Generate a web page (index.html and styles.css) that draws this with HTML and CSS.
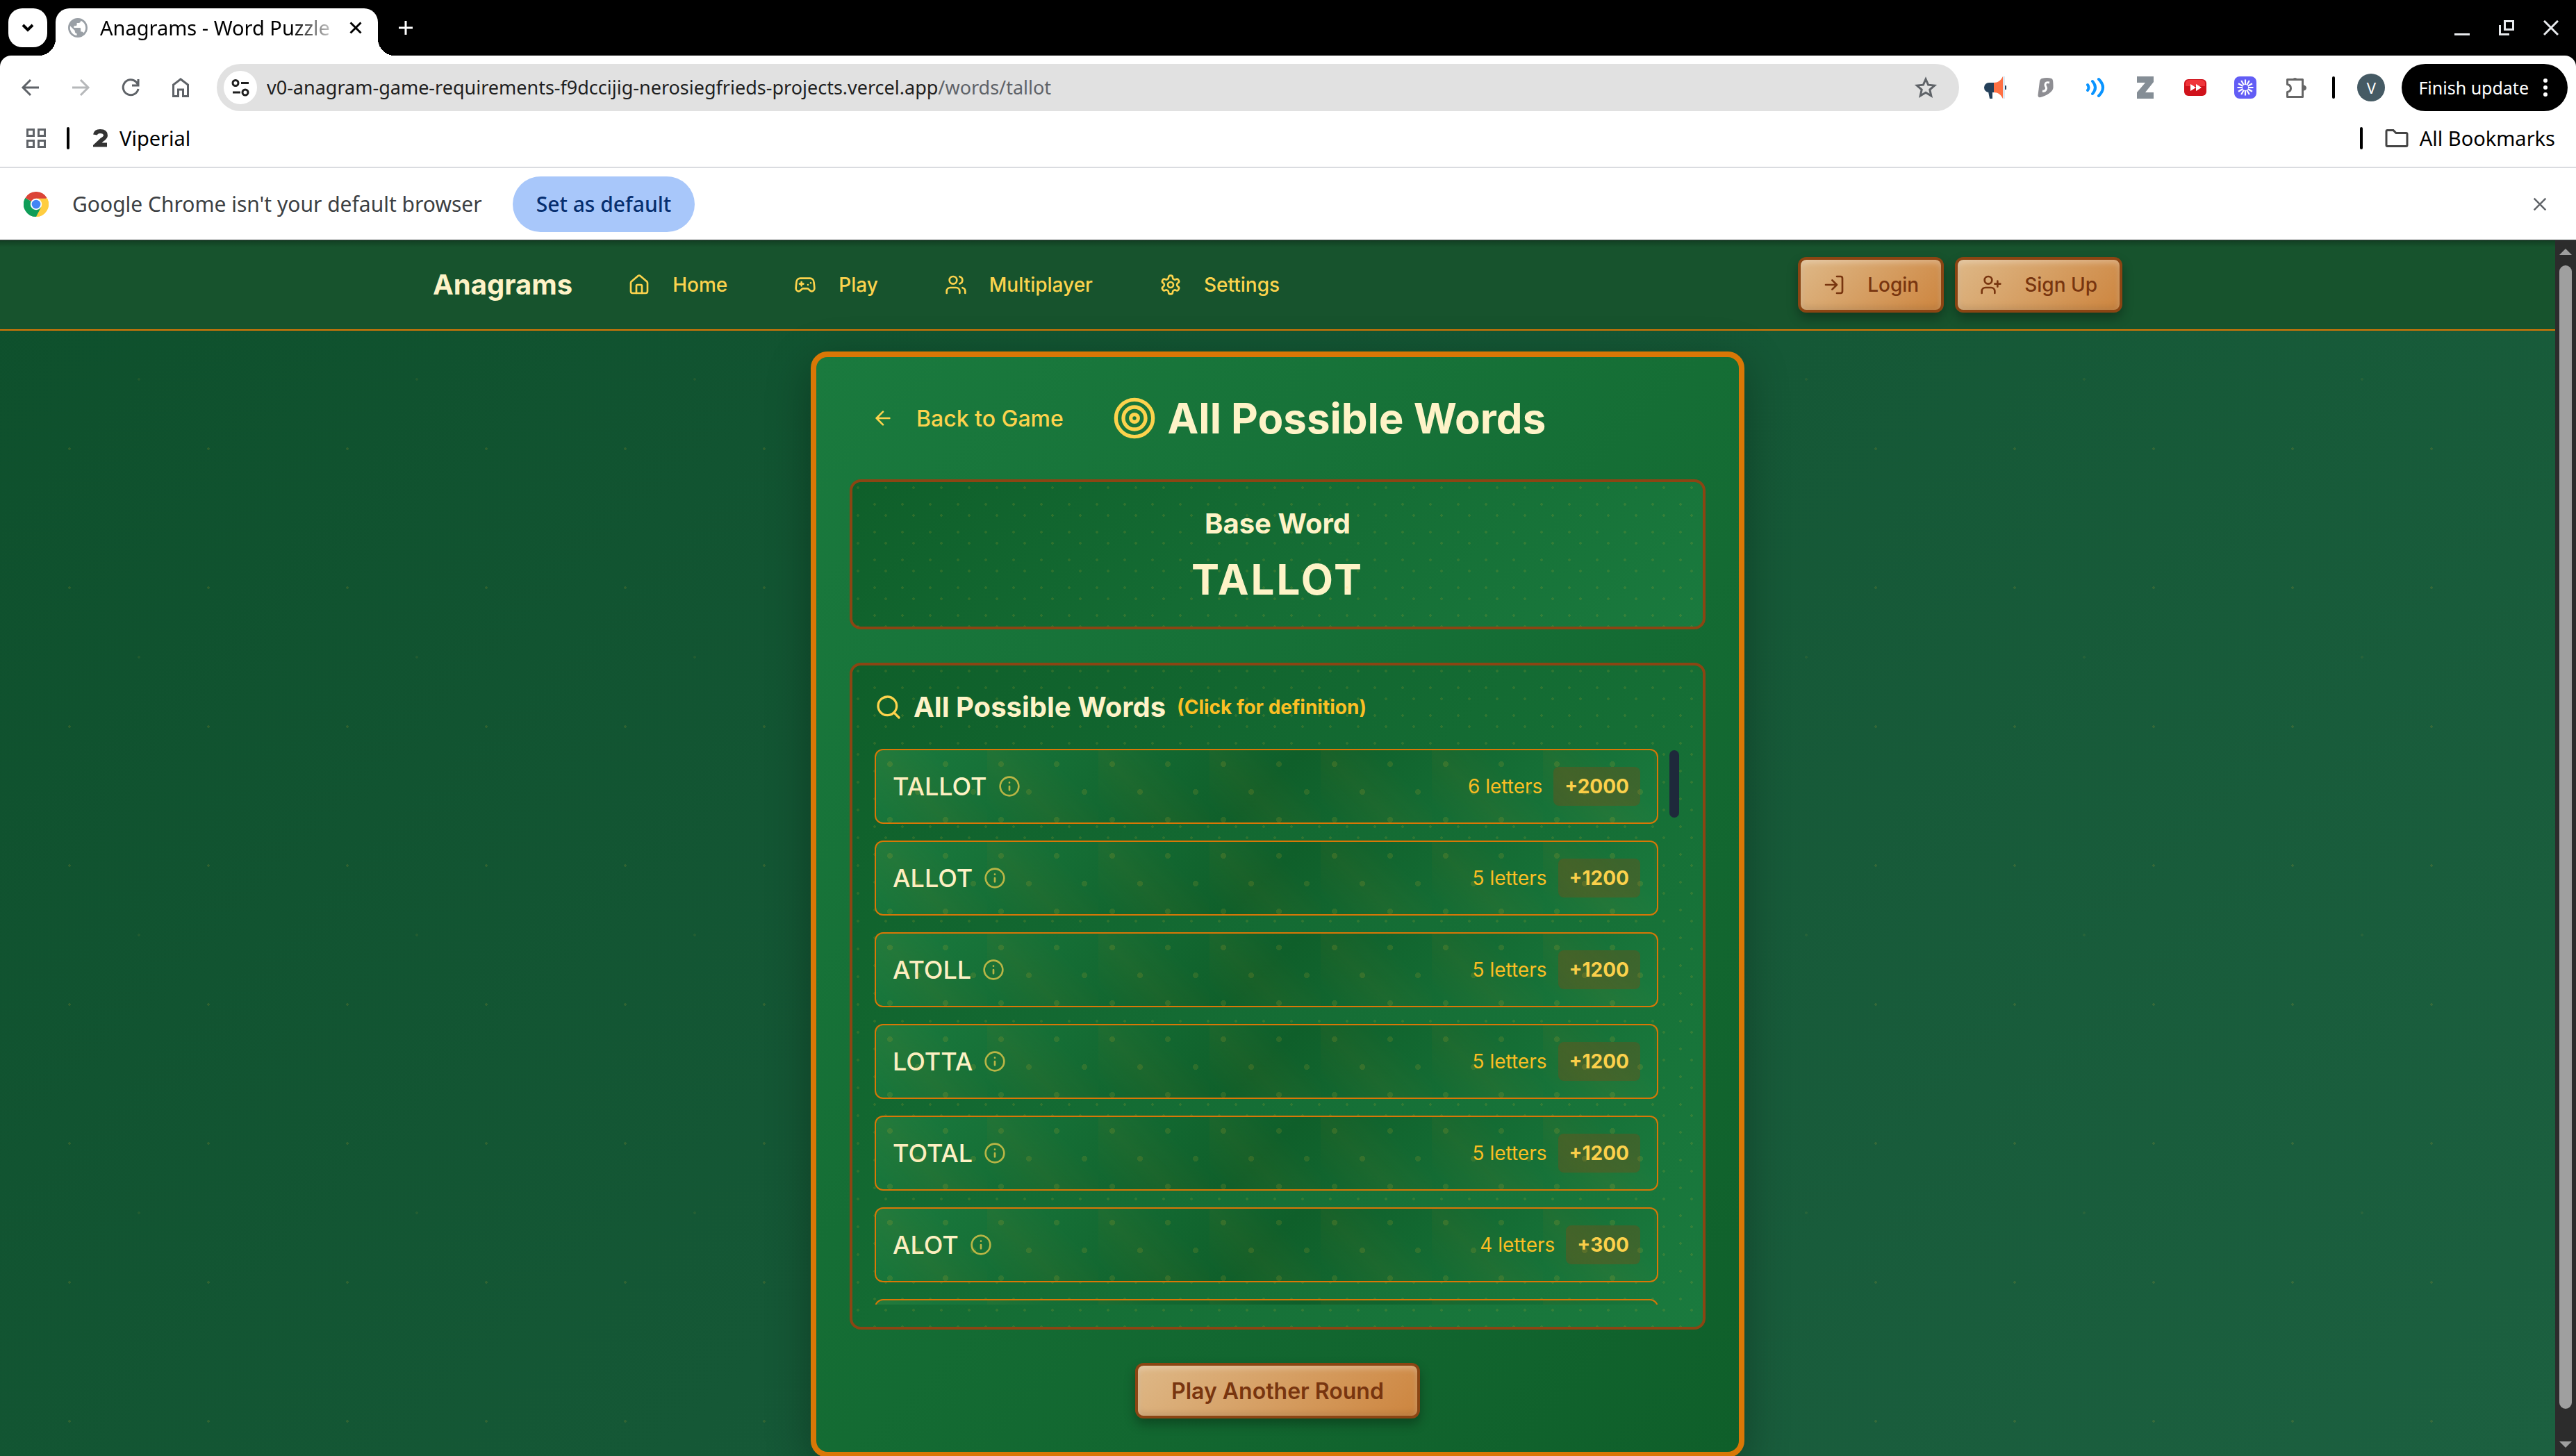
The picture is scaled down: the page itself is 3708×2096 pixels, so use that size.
FILE: index.html
```html
<!DOCTYPE html>
<html lang="en">
<head>
<meta charset="utf-8">
<title>Anagrams - Word Puzzle</title>
<link rel="stylesheet" href="styles.css">
</head>
<body>

<!-- Shared icons -->
<svg class="sprite" aria-hidden="true">
  <symbol id="close" viewBox="0 0 24 24"><path d="M2 2L22 22M22 2L2 22"/></symbol>
  <symbol id="info" viewBox="0 0 24 24"><circle cx="12" cy="12" r="10"/><path d="M12 16v-4M12 8h.01"/></symbol>
</svg>

<header class="browser">
  <div class="tabstrip">
    <button class="tab-search" aria-label="Search tabs"><svg viewBox="0 0 20 20"><path d="M3 6l7 7 7-7"/></svg></button>
    <div class="tab">
      <svg class="favicon" viewBox="2 2 20 20"><path fill="#9aa0a6" d="M12 2C6.480 2 2 6.480 2 12s4.480 10 10 10 10-4.480 10-10S17.520 2 12 2zm-1 17.930c-3.950-.490-7-3.850-7-7.930 0-.620.080-1.210.210-1.790L9 15v1c0 1.100.900 2 2 2v1.930zm6.900-2.540c-.260-.810-1-1.390-1.900-1.390h-1v-3c0-.550-.450-1-1-1H8v-2h2c.550 0 1-.450 1-1V7h2c1.100 0 2-.900 2-2v-.410c2.930 1.190 5 4.060 5 7.410 0 2.080-.800 3.970-2.100 5.390z"/></svg>
      <span class="tab-title">Anagrams - Word Puzzle</span>
      <button class="tab-close" aria-label="Close tab"><svg class="stroke-3" width="18" height="18"><use href="#close"/></svg></button>
    </div>
    <button class="tab-new" aria-label="New tab"><svg viewBox="0 0 20 20"><path d="M10 0v20M0 10h20"/></svg></button>
    <div class="window-controls">
      <button aria-label="Minimize"><svg viewBox="0 0 22 22"><path d="M0 20.500h22"/></svg></button>
      <button aria-label="Restore"><svg viewBox="0 0 22 22"><path d="M8.500 1.500h12v12h-12zM1.500 7v13.500H15"/></svg></button>
      <button aria-label="Close window"><svg viewBox="0 0 22 22"><path d="M1 1l20 20M21 1L1 21"/></svg></button>
    </div>
  </div>

  <div class="toolbar">
    <button aria-label="Back"><svg viewBox="0 0 40 40"><path d="M32 20H9M20 9L9 20l11 11"/></svg></button>
    <button class="dim" aria-label="Forward"><svg viewBox="0 0 40 40"><path d="M8 20h23M20 9l11 11-11 11"/></svg></button>
    <button aria-label="Reload"><svg viewBox="0 0 40 40"><path d="M31 22a11 11 0 1 1-3-10l3 4M31 8v9h-9"/></svg></button>
    <button aria-label="Home"><svg viewBox="0 0 40 40"><path d="M9.500 32.500V16L20 8l10.500 8v16.500h-7V23h-7v9.500z"/></svg></button>
    <div class="omnibox">
      <button class="site-info" aria-label="Site information"><svg viewBox="0 0 48 48"><circle cx="17" cy="17.500" r="4"/><circle cx="31" cy="31" r="4"/><path d="M25 17.500h11M13 31h11"/></svg></button>
      <span class="url">v0-anagram-game-requirements-f9dccijig-nerosiegfrieds-projects.vercel.app<span class="url-path">/words/tallot</span></span>
      <button aria-label="Bookmark this tab"><svg viewBox="0 0 40 40"><path d="M20 8l3.600 8.200 9 .9-6.800 6 2 8.900L20 27.300 12.200 32l2-8.900-6.800-6 9-.9z"/></svg></button>
    </div>
    <div class="extensions">
      <svg viewBox="0 0 32 32"><path d="M7 9h8v14H7a7 7 0 0 1 0-14zM6 22h6v10H8z" fill="#24405a"/><path d="M14 9c6 0 10-3 13-9v32c-3-6-7-9-13-9z" fill="#ff7043"/><path d="M27 0h3v32h-3z" fill="#dfe9f3"/><path d="M30 13a3 3 0 0 1 0 6z" fill="#24405a"/></svg>
      <svg viewBox="0 0 32 32"><path d="M11 3c5-1.500 10-1.500 14 0 2 1 2.500 3 2.500 13 0 6-10 12-18 14-3 .5-4-.5-4-3L8 7c.5-2 1.500-3.500 3-4z" fill="#8e8e93"/><path d="M22 9c-4-1-6 0-6 3 0 4 3 3 1 7-1 2-3 2.500-5 2" stroke="#fff" stroke-width="3" fill="none"/></svg>
      <svg viewBox="0 0 32 32" fill="none" stroke="#0a94ff" stroke-width="4" stroke-linecap="round"><path d="M5 12q3 4 0 8M12 7q8 9 0 18M21 4q12 12 0 24"/></svg>
      <svg viewBox="0 0 32 32"><path d="M4 0h24v8L16 23h12v9H4v-9L16 9H4z" fill="#858e96"/></svg>
      <svg viewBox="0 0 32 32"><rect y="4" width="32" height="24" rx="6" fill="#d0121b"/><path d="M2 9q1-4 6-4h16q5 0 6 4v5H2z" fill="#f0343a"/><path d="M9 11l8 5-8 5zM17 11l8 5-8 5z" fill="#fff"/></svg>
      <svg viewBox="0 0 32 32"><rect width="32" height="32" rx="8" fill="#625df5"/><path d="M16 4.500v23M4.500 16h23M10.200 6l11.600 20M21.800 6L10.200 26M6 10.200l20 11.600M26 10.200L6 21.800" stroke="#fff" stroke-width="2.200"/><circle cx="16" cy="16" r="4" fill="#625df5"/></svg>
      <svg viewBox="0 0 32 32"><path d="M4.500 29.500h22V4.500h-22v7q5 1 5 5.500t-5 5.500z" fill="none" stroke="#666" stroke-width="3" stroke-linejoin="round"/><path d="M12 4a4 4 0 0 1 7 0zM27 12q5 1 5 4.500T27 21z" fill="#666"/></svg>
    </div>
    <span class="divider"></span>
    <button class="avatar" aria-label="Profile">V</button>
    <button class="update"><span>Finish update</span><svg viewBox="0 0 8 28"><circle cx="4" cy="4" r="3"/><circle cx="4" cy="14" r="3"/><circle cx="4" cy="24" r="3"/></svg></button>
  </div>

  <div class="bookmarks">
    <svg class="apps" viewBox="0 0 28 28"><path d="M1.500 1.500h9v9h-9zM17.500 1.500h9v9h-9zM1.500 17.500h9v9h-9zM17.500 17.500h9v9h-9z"/></svg>
    <span class="divider"></span>
    <a class="bookmark" href="#"><svg class="two" viewBox="0 0 22 26"><path d="M3 8Q4 3 10 3Q18 3 18 9Q18 12 13 15L5 22.500H20"/></svg>Viperial</a>
    <a class="bookmark all" href="#"><span class="divider"></span><svg class="folder" viewBox="0 0 34 26"><path d="M2 3q0-1.500 1.500-1.500H12l4 4h14.500q1.500 0 1.500 1.500v16q0 1.500-1.500 1.500h-27Q2 24.500 2 23z"/></svg>All Bookmarks</a>
  </div>

  <div class="infobar">
    <svg class="chrome" viewBox="0 0 48 48"><circle cx="24" cy="24" r="24" fill="#fff"/><path d="M24 24L3.200 12A24 24 0 0 1 44.800 12z" fill="#db4437"/><path d="M24 24L44.800 12A24 24 0 0 1 24 48z" fill="#ffcd40"/><path d="M24 24L24 48A24 24 0 0 1 3.200 12z" fill="#0f9d58"/><path d="M24 13h21.300A24 24 0 0 1 24 48l9.500-18.500z" fill="#ffcd40"/><path d="M14.500 29.500L3.200 12A24 24 0 0 0 24 48l9.500-18.500z" fill="#0f9d58"/><circle cx="24" cy="24" r="11" fill="#fff"/><circle cx="24" cy="24" r="8.500" fill="#4285f4"/></svg>
    <span>Google Chrome isn't your default browser</span>
    <button class="set-default">Set as default</button>
    <button class="infobar-close" aria-label="Dismiss"><svg class="stroke-3" width="20" height="20"><use href="#close"/></svg></button>
  </div>
</header>

<div class="viewport">
  <div class="page">
    <nav class="site-nav">
      <div class="site-nav-inner">
        <a class="brand" href="#">Anagrams</a>
        <div class="nav-links">
          <a href="#"><svg viewBox="0 0 24 24"><path d="M15 21v-8a1 1 0 0 0-1-1h-4a1 1 0 0 0-1 1v8"/><path d="M3 10a2 2 0 0 1 .709-1.528l7-5.999a2 2 0 0 1 2.582 0l7 5.999A2 2 0 0 1 21 10v9a2 2 0 0 1-2 2H5a2 2 0 0 1-2-2z"/></svg>Home</a>
          <a href="#"><svg viewBox="0 0 24 24"><path d="M6 11h4M8 9v4M15 12h.01M18 10h.01"/><path d="M17.320 5H6.680a4 4 0 0 0-3.978 3.590C2.604 9.416 2 14.456 2 16a3 3 0 0 0 3 3c1 0 1.500-.5 2-1l1.414-1.414A2 2 0 0 1 9.828 16h4.344a2 2 0 0 1 1.414.586L17 18c.5.500 1 1 2 1a3 3 0 0 0 3-3c0-1.545-.604-6.584-.685-7.258A4 4 0 0 0 17.320 5z"/></svg>Play</a>
          <a href="#"><svg viewBox="0 0 24 24"><path d="M16 21v-2a4 4 0 0 0-4-4H6a4 4 0 0 0-4 4v2"/><circle cx="9" cy="7" r="4"/><path d="M22 21v-2a4 4 0 0 0-3-3.870M16 3.130a4 4 0 0 1 0 7.750"/></svg>Multiplayer</a>
          <a href="#"><svg viewBox="0 0 24 24"><path d="M12.220 2h-.44a2 2 0 0 0-2 2v.18a2 2 0 0 1-1 1.730l-.43.250a2 2 0 0 1-2 0l-.15-.08a2 2 0 0 0-2.730.73l-.22.380a2 2 0 0 0 .73 2.730l.15.100a2 2 0 0 1 1 1.720v.510a2 2 0 0 1-1 1.740l-.15.090a2 2 0 0 0-.73 2.730l.22.380a2 2 0 0 0 2.730.73l.15-.08a2 2 0 0 1 2 0l.43.250a2 2 0 0 1 1 1.730V20a2 2 0 0 0 2 2h.44a2 2 0 0 0 2-2v-.18a2 2 0 0 1 1-1.730l.43-.25a2 2 0 0 1 2 0l.15.080a2 2 0 0 0 2.730-.73l.22-.39a2 2 0 0 0-.73-2.730l-.15-.08a2 2 0 0 1-1-1.740v-.5a2 2 0 0 1 1-1.740l.15-.09a2 2 0 0 0 .73-2.730l-.22-.38a2 2 0 0 0-2.730-.73l-.15.080a2 2 0 0 1-2 0l-.43-.25a2 2 0 0 1-1-1.730V4a2 2 0 0 0-2-2z"/><circle cx="12" cy="12" r="3"/></svg>Settings</a>
        </div>
        <div class="nav-actions">
          <button class="wood"><svg viewBox="0 0 24 24"><path d="M15 3h4a2 2 0 0 1 2 2v14a2 2 0 0 1-2 2h-4M10 17l5-5-5-5M15 12H3"/></svg>Login</button>
          <button class="wood"><svg viewBox="0 0 24 24"><path d="M16 21v-2a4 4 0 0 0-4-4H6a4 4 0 0 0-4 4v2"/><circle cx="9" cy="7" r="4"/><path d="M19 8v6M22 11h-6"/></svg>Sign Up</button>
        </div>
      </div>
    </nav>

    <main class="card">
      <div class="card-head">
        <a class="back" href="#"><svg viewBox="0 0 24 24"><path d="M12 19l-7-7 7-7M19 12H5"/></svg>Back to Game</a>
        <h1><svg viewBox="0 0 24 24"><circle cx="12" cy="12" r="10"/><circle cx="12" cy="12" r="6"/><circle cx="12" cy="12" r="2"/></svg>All Possible Words</h1>
        <span class="head-spacer"></span>
      </div>

      <section class="panel base">
        <h2>Base Word</h2>
        <p class="base-word">TALLOT</p>
      </section>

      <section class="panel">
        <h2 class="list-title"><svg viewBox="0 0 24 24"><circle cx="11" cy="11" r="8"/><path d="M21 21l-4.300-4.300"/></svg>All Possible Words <small>(Click for definition)</small></h2>
        <div class="list-frame">
          <ul class="words">
            <li><button class="word"><span class="name">TALLOT</span><svg><use href="#info"/></svg><span class="count">6 letters</span><span class="score">+2000</span></button></li>
            <li><button class="word"><span class="name">ALLOT</span><svg><use href="#info"/></svg><span class="count">5 letters</span><span class="score">+1200</span></button></li>
            <li><button class="word"><span class="name">ATOLL</span><svg><use href="#info"/></svg><span class="count">5 letters</span><span class="score">+1200</span></button></li>
            <li><button class="word"><span class="name">LOTTA</span><svg><use href="#info"/></svg><span class="count">5 letters</span><span class="score">+1200</span></button></li>
            <li><button class="word"><span class="name">TOTAL</span><svg><use href="#info"/></svg><span class="count">5 letters</span><span class="score">+1200</span></button></li>
            <li><button class="word"><span class="name">ALOT</span><svg><use href="#info"/></svg><span class="count">4 letters</span><span class="score">+300</span></button></li>
            <li><div class="word"></div></li>
          </ul>
          <span class="list-thumb"></span>
        </div>
      </section>

      <div class="card-foot"><button class="wood large">Play Another Round</button></div>
    </main>
  </div>

  <div class="scrollbar">
    <svg viewBox="0 0 18 9"><path d="M9 0l9 9H0z"/></svg>
    <span class="scroll-thumb"></span>
    <svg viewBox="0 0 18 9"><path d="M0 0h18L9 9z"/></svg>
  </div>
</div>

</body>
</html>
```
FILE: styles.css
```css
* { box-sizing: border-box; }

:root {
  --ui: "Noto Sans", sans-serif;
  --app: Inter, sans-serif;
  --cream: #fef3c7;
  --gold: #fcd34d;
  --amber: #fbbf24;
  --orange: #d97706;
  --brown: #8b4513;
  --felt-light: #1a7a3e;
  --felt-dark: #0f5f2a;
}

body {
  margin: 0;
  height: 100vh;
  display: flex;
  flex-direction: column;
  overflow: hidden;
  background: #000;
  font-family: var(--app);
}

button {
  margin: 0;
  padding: 0;
  border: 0;
  background: none;
  color: inherit;
  font: inherit;
}

a { color: inherit; text-decoration: none; }
svg { display: block; flex: none; }
.sprite { position: absolute; width: 0; height: 0; }

/* Browser frame */
.browser {
  flex: none;
  font-family: var(--ui);
  font-size: 29px;
  line-height: 40px;
  color: #000;
}

.tabstrip {
  display: flex;
  align-items: flex-start;
  height: 80px;
  padding: 12px 14px 0 12px;
}

.tab-search {
  display: grid;
  place-items: center;
  width: 56px;
  height: 56px;
  margin-right: 12px;
  border-radius: 20px;
  background: #fff;
}
.tab-search svg { width: 20px; fill: none; stroke: #000; stroke-width: 4; }

.tab {
  position: relative;
  display: flex;
  align-items: center;
  width: 464px;
  height: 68px;
  padding: 0 18px 12px;
  border-radius: 20px 20px 0 0;
  background: #fff;
}
.tab::before,
.tab::after {
  content: "";
  position: absolute;
  bottom: 0;
  width: 24px;
  height: 24px;
}
.tab::before { right: 100%; background: radial-gradient(circle at 0 0, transparent 24px, #fff 24px); }
.tab::after { left: 100%; background: radial-gradient(circle at 100% 0, transparent 24px, #fff 24px); }
.favicon { width: 28px; margin-right: 18px; }
.tab-title {
  flex: 1;
  white-space: nowrap;
  mask-image: linear-gradient(to right, #000 276px, transparent 348px);
}
.tab-close { display: grid; place-items: center; width: 28px; }
.stroke-3 { stroke: #000; stroke-width: 4; }
.tab-new { display: grid; place-items: center; width: 56px; height: 56px; margin-left: 12px; }
.tab-new svg { width: 20px; stroke: #fff; stroke-width: 3; }

.window-controls { display: flex; gap: 20px; margin-left: auto; }
.window-controls button { display: grid; place-items: center; width: 44px; height: 56px; }
.window-controls svg { width: 22px; fill: none; stroke: #e8eaed; stroke-width: 3; }

.toolbar {
  display: flex;
  align-items: center;
  height: 92px;
  padding: 0 12px 0 24px;
  border-radius: 16px 16px 0 0;
  background: #fff;
}
.toolbar > button:not(.avatar, .update) { margin-right: 32px; }
.toolbar button > svg[viewBox="0 0 40 40"] {
  width: 40px;
  fill: none;
  stroke: #5f6368;
  stroke-width: 3;
}
.toolbar .dim { opacity: .45; }

.omnibox {
  flex: 1;
  display: flex;
  align-items: center;
  height: 68px;
  padding: 0 28px 0 10px;
  border-radius: 34px;
  background: #e1e1e1;
  color: #1f1f1f;
  font-size: 27px;
}
.site-info { margin-right: 14px; border-radius: 24px; background: #fff; }
.site-info svg { width: 48px; fill: none; stroke: #1f1f1f; stroke-width: 3; }
.url { flex: 1; white-space: nowrap; overflow: hidden; }
.url-path { color: #5f6368; }

.extensions { display: flex; gap: 40px; margin: 0 37px 0 36px; }
.extensions svg { width: 32px; height: 32px; }
.divider { width: 4px; height: 32px; border-radius: 2px; background: #000; }
.avatar {
  width: 40px;
  height: 40px;
  margin: 0 24px 0 32px;
  border-radius: 20px;
  background: #455a64;
  color: #fff;
  font-size: 22px;
  line-height: 40px;
}
.update {
  display: flex;
  align-items: center;
  gap: 20px;
  height: 68px;
  padding: 0 28px 0 24px;
  border-radius: 34px;
  background: #000;
  color: #fff;
  font-size: 25px;
}
.update svg { width: 8px; fill: #fff; }

.bookmarks {
  display: flex;
  align-items: center;
  height: 70px;
  padding: 0 30px 14px 38px;
  background: #fff;
  border-bottom: 2px solid #dadce0;
}
.apps { width: 28px; margin-right: 30px; fill: none; stroke: #5f6368; stroke-width: 3; }
.bookmark { display: flex; align-items: center; gap: 16px; }
.two { width: 22px; margin-left: 34px; fill: none; stroke: #333; stroke-width: 6; }
.all { margin-left: auto; }
.folder { width: 34px; height: 26px; margin-left: 16px; fill: none; stroke: #444; stroke-width: 3; }

.infobar {
  display: flex;
  align-items: center;
  height: 104px;
  padding: 0 42px 0 34px;
  background: #fff;
  border-bottom: 1px solid #3c4043;
  color: #3c4043;
  font-size: 30px;
}
.chrome { width: 36px; margin-right: 34px; }
.set-default {
  height: 80px;
  margin-left: 44px;
  padding: 0 34px;
  border-radius: 40px;
  background: #a8c7fa;
  color: #062e6f;
  font-weight: 500;
}
.infobar-close { margin-left: auto; }
.infobar-close svg { stroke: #5f6368; stroke-width: 3; }

/* Web page */
.viewport { flex: 1; display: flex; min-height: 0; }

.page {
  flex: 1;
  overflow: hidden;
  background:
    radial-gradient(circle, rgba(251, 191, 36, .12) 2px, transparent 2px) 0 0 / 200px 200px,
    radial-gradient(circle, rgba(251, 191, 36, .07) 2px, transparent 2px) 0 0 / 400px 400px,
    linear-gradient(135deg, #0e502c, #1c6040);
}

.site-nav {
  background: linear-gradient(rgba(0, 0, 0, .25), transparent 10px), #17532d;
  border-bottom: 2px solid var(--orange);
}
.site-nav-inner {
  display: flex;
  align-items: center;
  max-width: 2560px;
  height: 128px;
  margin: 0 auto;
  padding: 0 64px;
  font-size: 28px;
  line-height: 40px;
  font-weight: 500;
}
.brand { font-size: 40px; font-weight: 700; color: var(--cream); }
.nav-links { display: flex; gap: 32px; margin-left: 48px; color: var(--gold); }
.nav-links a { display: flex; align-items: center; gap: 32px; padding: 0 32px; }
.site-nav svg,
.back svg {
  width: 32px;
  fill: none;
  stroke: currentColor;
  stroke-width: 2;
  stroke-linecap: round;
  stroke-linejoin: round;
}
.nav-actions { display: flex; gap: 16px; margin-left: auto; }

.wood {
  display: flex;
  align-items: center;
  gap: 32px;
  height: 80px;
  padding: 0 32px;
  border: 4px solid var(--brown);
  border-radius: 12px;
  background: linear-gradient(135deg, #deb887, #cd853f);
  box-shadow:
    inset 0 4px 8px rgba(255, 255, 255, .3),
    inset 0 -4px 8px rgba(0, 0, 0, .1),
    0 8px 16px rgba(0, 0, 0, .3);
  color: #78350f;
}
.wood.large { padding: 0 48px; font-size: 32px; font-weight: 600; }

.card {
  max-width: 1344px;
  margin: 30px auto 0;
  padding: 48px;
  border: 8px solid var(--orange);
  border-radius: 24px;
  background: linear-gradient(135deg, var(--felt-light), var(--felt-dark));
  box-shadow: 0 16px 64px rgba(0, 0, 0, .3);
  color: var(--cream);
}

.card-head {
  display: flex;
  align-items: center;
  justify-content: space-between;
  height: 80px;
  margin-bottom: 48px;
}
.back {
  display: flex;
  align-items: center;
  gap: 32px;
  padding-left: 32px;
  color: var(--gold);
  font-size: 32px;
  font-weight: 500;
}
.head-spacer { width: 160px; }
h1 {
  display: flex;
  align-items: center;
  gap: 16px;
  margin: 0;
  font-size: 60px;
  line-height: 72px;
  font-weight: 700;
}
h1 svg { width: 64px; fill: none; stroke: var(--gold); stroke-width: 2; }

.panel {
  position: relative;
  margin-bottom: 48px;
  padding: 32px;
  border: 4px solid var(--brown);
  border-radius: 16px;
  background: linear-gradient(135deg, var(--felt-dark), var(--felt-light));
}
.panel::before,
.word::before {
  content: "";
  position: absolute;
  inset: 0;
  pointer-events: none;
}
.panel::before {
  background:
    radial-gradient(circle at 20% 20%, rgba(251, 191, 36, .12) 2px, transparent 2px) 0 0 / 40px 40px,
    radial-gradient(circle at 80% 80%, rgba(251, 191, 36, .12) 2px, transparent 2px) 0 0 / 40px 40px;
}
.panel h2 { margin: 0; font-size: 40px; line-height: 56px; font-weight: 700; }

.base { text-align: center; }
.base-word {
  margin: 16px 0 0;
  font-size: 60px;
  line-height: 72px;
  font-weight: 700;
  letter-spacing: 3px;
}

.panel .list-title { display: flex; align-items: center; gap: 16px; margin-bottom: 32px; }
.list-title svg {
  width: 40px;
  fill: none;
  stroke: var(--gold);
  stroke-width: 2;
  stroke-linecap: round;
}
.list-title small { color: var(--amber); font-size: 28px; }

.list-frame { position: relative; }
.words {
  height: 800px;
  margin: 0;
  padding: 0 32px 0 0;
  overflow: hidden;
  list-style: none;
}
.words li { margin-bottom: 24px; }
.list-thumb {
  position: absolute;
  top: 2px;
  right: 2px;
  width: 14px;
  height: 97px;
  border-radius: 7px;
  background: #1e293b;
}

.word {
  position: relative;
  display: flex;
  align-items: center;
  gap: 16px;
  width: 100%;
  height: 108px;
  padding: 0 24px;
  border: 2px solid var(--orange);
  border-radius: 12px;
  background: linear-gradient(135deg, var(--felt-light), var(--felt-dark) 50%, var(--felt-light));
  font-size: 28px;
  line-height: 40px;
}
.word::before {
  background:
    radial-gradient(circle at 25% 25%, rgba(251, 191, 36, .12) 4px, transparent 4px) 0 0 / 80px 80px,
    radial-gradient(circle at 75% 75%, rgba(251, 191, 36, .12) 4px, transparent 4px) 0 0 / 80px 80px,
    linear-gradient(45deg, transparent 25%, rgba(217, 119, 6, .05) 50%, transparent 75%) 0 0 / 160px 160px;
}
.word .name { color: var(--cream); font-size: 36px; font-weight: 500; }
.word svg {
  width: 32px;
  height: 32px;
  fill: none;
  stroke: var(--gold);
  stroke-width: 2;
  stroke-linecap: round;
  opacity: .7;
}
.count { margin-left: auto; color: var(--amber); }
.score {
  padding: 8px 16px;
  border-radius: 8px;
  background: rgba(146, 64, 14, .3);
  color: var(--gold);
  font-weight: 700;
}

.card-foot { display: flex; justify-content: center; }

/* Page scrollbar */
.scrollbar {
  flex: none;
  display: flex;
  flex-direction: column;
  align-items: center;
  gap: 15px;
  width: 30px;
  padding: 12px 0;
  background: #2c2c2c;
}
.scrollbar svg { width: 18px; fill: #9f9f9f; }
.scroll-thumb { flex: 1; width: 18px; margin-bottom: 32px; border-radius: 9px; background: #9f9f9f; }
```
